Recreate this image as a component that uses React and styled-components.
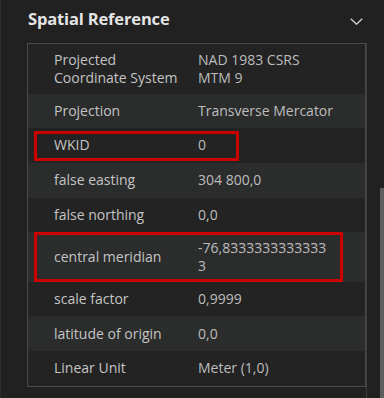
import React from "react"
import styled, { createGlobalStyle } from "styled-components"

const GlobalStyle = createGlobalStyle`
  html, body {
    margin: 0;
    padding: 0;
    background: #212121;
  }
`

const Panel = styled.div`
  width: 384px;
  height: 398px;
  display: flex;
  flex-direction: column;
  background: #212121;
  border-left: 1px solid #2c2c2c;
  box-sizing: border-box;
  overflow: hidden;
  font-family: "Open Sans", "Noto Sans", sans-serif;
`

const Header = styled.div`
  height: 36px;
  margin-bottom: 7px;
  display: flex;
  align-items: center;
  justify-content: space-between;
  padding: 0 21px 0 27px;
  box-sizing: border-box;
  flex-shrink: 0;
`

const Title = styled.h2`
  margin: 0;
  font-size: 16.5px;
  font-weight: 700;
  color: #e4e4e4;
  letter-spacing: -0.15px;
`

const ChevronBox = styled.span`
  display: flex;
  padding-top: 6px;
`

const Body = styled.div`
  flex: 1;
  display: flex;
  min-height: 0;
`

const Content = styled.div`
  width: 366px;
  padding-left: 26px;
  border-right: 1px solid #3e3e3e;
  box-sizing: border-box;
`

const Table = styled.div`
  border: 1px solid #4a4a4a;
  display: flex;
  flex-direction: column;
`

const Row = styled.div`
  position: relative;
  display: grid;
  grid-template-columns: 170px 1fr;
  align-items: center;
  min-height: 34.67px;
  padding: 6.5px 0;
  box-sizing: border-box;
  background: ${p => (p.$odd ? "#232323" : "#2b2c2c")};
  font-size: 14px;
  line-height: 18.3px;
`

const Label = styled.div`
  padding-left: 26px;
  color: #c4c4c4;
  white-space: pre-line;
`

const Value = styled.div`
  color: #bdbdbd;
  white-space: pre-line;
`

const Highlight = styled.div`
  position: absolute;
  left: 6px;
  top: ${p => p.$top}px;
  width: ${p => p.$width}px;
  height: ${p => p.$height}px;
  border: 3px solid #cc0000;
  box-sizing: border-box;
  pointer-events: none;
`

const Track = styled.div`
  flex: 1;
  display: flex;
  justify-content: flex-end;
  padding-top: 145px;
`

const Thumb = styled.div`
  width: 4px;
  height: 100%;
  background: #5e5e5e;
`

const Chevron = () => (
  <svg width="13" height="7" viewBox="0 0 13 7" fill="none">
    <path d="M0.8 0.8l5.7 5.4 5.7-5.4" stroke="#d0d0d0" strokeWidth="1.4" />
  </svg>
)

const rows = [
  { label: "Projected\nCoordinate System", value: "NAD 1983 CSRS\nMTM 9" },
  { label: "Projection", value: "Transverse Mercator" },
  { label: "WKID", value: "0", box: { top: 3, width: 205, height: 30 } },
  { label: "false easting", value: "304 800,0" },
  { label: "false northing", value: "0,0" },
  { label: "central meridian", value: "-76,8333333333333\n3", box: { top: 0, width: 309, height: 50 } },
  { label: "scale factor", value: "0,9999" },
  { label: "latitude of origin", value: "0,0" },
  { label: "Linear Unit", value: "Meter (1,0)" },
]

const App = () => {
  return (
    <Panel>
      <GlobalStyle />
      <Header>
        <Title>Spatial Reference</Title>
        <ChevronBox>
          <Chevron />
        </ChevronBox>
      </Header>
      <Body>
        <Content>
          <Table>
            {rows.map((r, i) => (
              <Row key={r.label} $odd={i % 2 === 0}>
                <Label>{r.label}</Label>
                <Value>{r.value}</Value>
                {r.box && <Highlight $top={r.box.top} $width={r.box.width} $height={r.box.height} />}
              </Row>
            ))}
          </Table>
        </Content>
        <Track>
          <Thumb />
        </Track>
      </Body>
    </Panel>
  )
}

export default App
